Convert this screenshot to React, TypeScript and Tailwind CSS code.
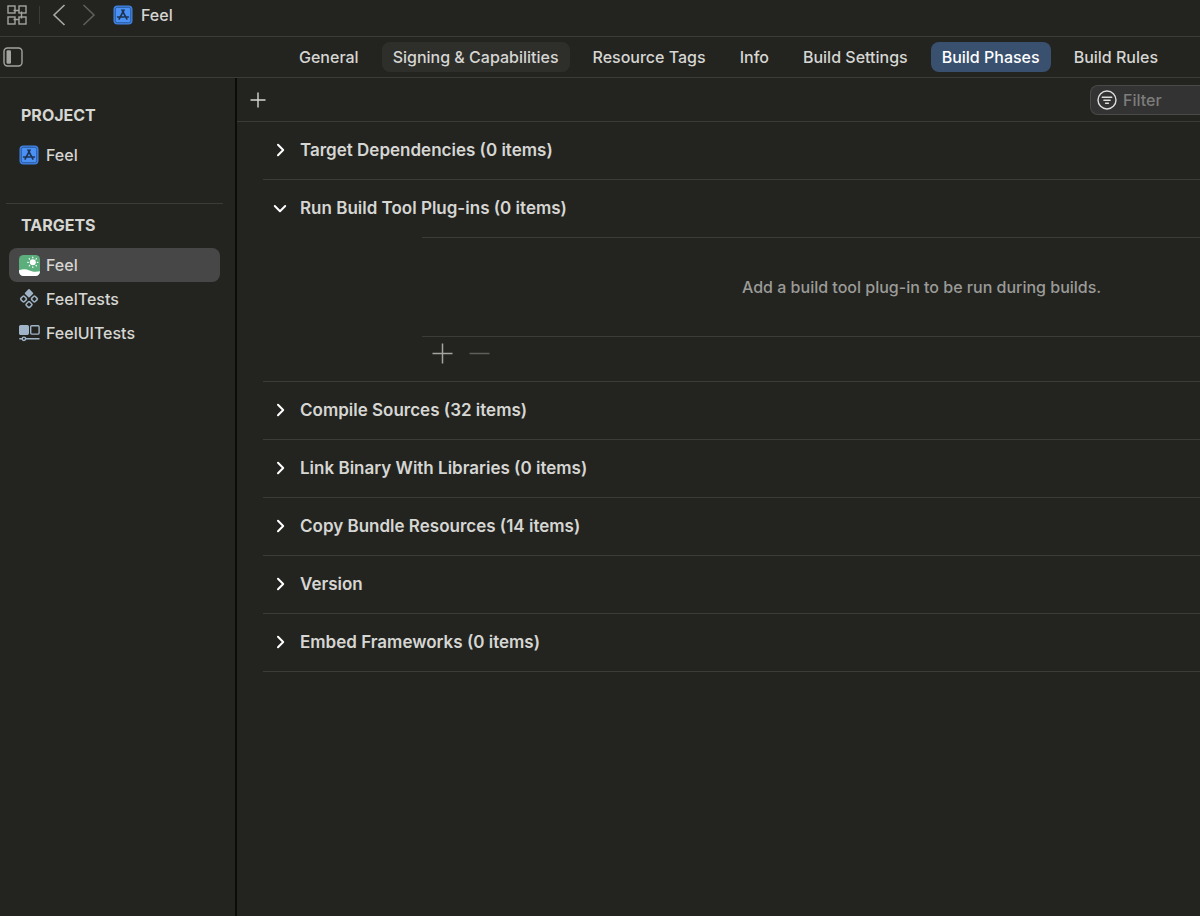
import { ReactNode, useState } from "react";
import clsx from "clsx";

const TABS = [
  "General",
  "Signing & Capabilities",
  "Resource Tags",
  "Info",
  "Build Settings",
  "Build Phases",
  "Build Rules",
];

const PHASES = [
  { id: "dependencies", title: "Target Dependencies (0 items)" },
  { id: "plugins", title: "Run Build Tool Plug-ins (0 items)" },
  { id: "sources", title: "Compile Sources (32 items)" },
  { id: "link", title: "Link Binary With Libraries (0 items)" },
  { id: "resources", title: "Copy Bundle Resources (14 items)" },
  { id: "version", title: "Version" },
  { id: "embed", title: "Embed Frameworks (0 items)" },
];

function GridIcon() {
  return (
    <svg width="20" height="20" viewBox="0 0 20 20" fill="none" stroke="#a3a39f" strokeWidth="1.4">
      <rect x="1" y="1" width="7" height="7" />
      <rect x="12" y="1" width="7" height="7" />
      <rect x="1" y="12" width="7" height="7" />
      <rect x="12" y="12" width="7" height="7" />
      <path d="M6.5 5.5H12M14.5 6.5V13.5M6.5 14.5H12" />
    </svg>
  );
}

function SidebarIcon() {
  return (
    <svg width="20" height="20" viewBox="0 0 20 20" fill="none">
      <rect x="1" y="1" width="18" height="18" rx="3.5" stroke="#a3a39f" strokeWidth="1.4" />
      <rect x="3.5" y="3.2" width="4.5" height="13.6" rx="1.2" fill="#a3a39f" />
    </svg>
  );
}

function ProjectIcon() {
  return (
    <svg className="shrink-0" width="20" height="20" viewBox="0 0 20 20" fill="none">
      <rect x="0.5" y="0.5" width="19" height="19" rx="4" fill="#3f83e6" />
      <rect x="2.3" y="2.3" width="15.4" height="15.4" rx="2" fill="#4a90f5" stroke="#2b568f" strokeWidth="0.9" />
      <path
        d="M9 5L13.9 14.1M11 5L6.1 14.1M4.6 12H11.2M13.2 12H15.4"
        stroke="#1d3350"
        strokeWidth="1.6"
        strokeLinecap="round"
      />
    </svg>
  );
}

function AppIcon() {
  return (
    <svg className="shrink-0" width="21" height="21" viewBox="0 0 21 21" fill="none">
      <rect width="21" height="21" rx="4.5" fill="#5cae7c" />
      <path d="M0 15.2C4 13.8 7 13.8 10.5 15.4C14 16.9 17 17 21 16.2V16.5A4.5 4.5 0 0 1 16.5 21H4.5A4.5 4.5 0 0 1 0 16.5Z" fill="#fff" />
      <circle cx="13.8" cy="7.3" r="3" fill="#fff" />
      <g stroke="#fff" strokeWidth="1.2" strokeLinecap="round">
        <path d="M13.8 2.2V2.8M13.8 11.8V12.4M8.7 7.3H9.3M18.3 7.3H18.9M10.2 3.7L10.6 4.1M17 10.5L17.4 10.9M10.2 10.9L10.6 10.5M17 4.1L17.4 3.7" />
      </g>
    </svg>
  );
}

function UnitTestIcon() {
  return (
    <svg className="shrink-0" width="20" height="20" viewBox="0 0 20 20" fill="none" stroke="#9fb4c6" strokeWidth="1.5" strokeLinejoin="round">
      <path d="M10 1L13.3 4.3L10 7.6L6.7 4.3Z" fill="#9fb4c6" strokeWidth="1.8" />
      <rect x="2.2" y="7.6" width="4.8" height="4.8" rx="1.2" transform="rotate(45 4.6 10)" />
      <rect x="13" y="7.6" width="4.8" height="4.8" rx="1.2" transform="rotate(45 15.4 10)" />
      <rect x="7.6" y="13.2" width="4.8" height="4.8" rx="1.2" transform="rotate(45 10 15.6)" />
    </svg>
  );
}

function UITestIcon() {
  return (
    <svg className="shrink-0" width="21" height="18" viewBox="0 0 21 18" fill="none" stroke="#9fb4c6" strokeWidth="1.4">
      <rect x="0.7" y="1.7" width="8.6" height="8.6" rx="1" fill="#9fb4c6" />
      <rect x="11.7" y="1.7" width="8.4" height="8.4" rx="1" />
      <path d="M0.3 14.8H3.2M6.6 14.8H20.5" />
      <circle cx="4.9" cy="14.8" r="1.7" />
    </svg>
  );
}

function FilterIcon() {
  return (
    <svg className="shrink-0" width="20" height="20" viewBox="0 0 20 20" fill="none" stroke="#dededc" strokeLinecap="round">
      <circle cx="10" cy="10" r="9" strokeWidth="1.4" />
      <path d="M5.3 7.2H14.7M6.9 10.2H13.1M8.6 13.2H11.4" strokeWidth="1.5" />
    </svg>
  );
}

function NavItem({ icon, label, selected }: { icon: ReactNode; label: string; selected?: boolean }) {
  return (
    <button
      className={clsx(
        "flex h-[34px] w-full items-center gap-1.5 rounded-lg px-[9px] text-left",
        selected && "bg-[#474747]"
      )}
    >
      <span className="flex w-[22px] justify-center">{icon}</span>
      {label}
    </button>
  );
}

function PluginsBody() {
  return (
    <div className="pl-[159px]">
      <div className="flex h-[100px] items-center border-y border-[#3b3b39] pl-80 text-[#9b9b98]">
        <p className="whitespace-nowrap">Add a build tool plug-in to be run during builds.</p>
      </div>
      <div className="flex h-11 items-start gap-4 px-2.5 pt-1.5">
        <button aria-label="Add plug-in">
          <svg width="21" height="21" viewBox="0 0 21 21" stroke="#a3a39f" strokeWidth="1.5">
            <path d="M0.5 10.5H20.5M10.5 0.5V20.5" />
          </svg>
        </button>
        <button aria-label="Remove plug-in" disabled>
          <svg width="21" height="21" viewBox="0 0 21 21" stroke="#5e5e5b" strokeWidth="1.5">
            <path d="M0.5 10.5H20.5" />
          </svg>
        </button>
      </div>
    </div>
  );
}

export default function App() {
  const [tab, setTab] = useState("Build Phases");
  const [open, setOpen] = useState<string[]>(["plugins"]);

  const toggle = (id: string) => {
    setOpen((prev) => (prev.includes(id) ? prev.filter((p) => p !== id) : [...prev, id]));
  };

  return (
    <div className="flex min-h-screen flex-col overflow-hidden bg-[#232420] font-[Inter,sans-serif] text-base leading-5 font-medium text-[#d6d6d3]">
      {/* Path bar */}
      <header className="flex h-[37px] items-center border-b border-[#3b3b39] px-[7px] pb-1.5">
        <button aria-label="Related items">
          <GridIcon />
        </button>
        <div className="mx-3 h-[18px] w-px bg-[#3b3b39]" />
        <button aria-label="Back">
          <svg width="14" height="22" viewBox="0 0 14 22" fill="none" stroke="#a9a9a6" strokeWidth="1.6">
            <path d="M12.5 1L2 11L12.5 21" />
          </svg>
        </button>
        <button className="ml-4" aria-label="Forward">
          <svg width="14" height="22" viewBox="0 0 14 22" fill="none" stroke="#5e5e5b" strokeWidth="1.6">
            <path d="M1.5 1L12 11L1.5 21" />
          </svg>
        </button>
        <a href="#project" className="ml-[17px] flex items-center gap-2">
          <ProjectIcon />
          Feel
        </a>
      </header>

      {/* Editor tabs */}
      <div className="flex h-[41px] items-center border-b border-[#3b3b39] pl-[3px]">
        <button aria-label="Toggle sidebar">
          <SidebarIcon />
        </button>
        <nav className="ml-[265px] flex gap-3 whitespace-nowrap">
          {TABS.map((name) => (
            <button
              key={name}
              onClick={() => setTab(name)}
              className={clsx(
                "h-[30px] rounded-lg px-[11px]",
                name === tab && "bg-[#39506f] text-white",
                name === "Signing & Capabilities" && name !== tab && "bg-[#2e2f2b]"
              )}
            >
              {name}
            </button>
          ))}
        </nav>
      </div>

      <div className="flex flex-1">
        {/* Targets */}
        <aside className="w-[237px] shrink-0 border-r-2 border-[#0b0b0a] pt-[27px]">
          <h2 className="px-[21px] font-bold">PROJECT</h2>
          <div className="mt-[13px] pr-[15px] pl-[9px]">
            <NavItem icon={<ProjectIcon />} label="Feel" />
          </div>
          <hr className="mt-[31px] mr-3 ml-1.5 border-[#3b3b39]" />
          <h2 className="mt-[11px] px-[21px] font-bold">TARGETS</h2>
          <div className="mt-[13px] pr-[15px] pl-[9px]">
            <NavItem icon={<AppIcon />} label="Feel" selected />
            <NavItem icon={<UnitTestIcon />} label="FeelTests" />
            <NavItem icon={<UITestIcon />} label="FeelUITests" />
          </div>
        </aside>

        {/* Build phases */}
        <main className="min-w-0 flex-1">
          <div className="flex h-11 items-center justify-between border-b border-[#3b3b39] pl-[13px]">
            <button aria-label="Add build phase">
              <svg width="16" height="16" viewBox="0 0 16 16" stroke="#d6d6d3" strokeWidth="1.4">
                <path d="M0.5 8H15.5M8 0.5V15.5" />
              </svg>
            </button>
            <label className="flex h-[30px] w-[110px] items-center gap-1.5 rounded-l-lg border border-r-0 border-[#4a4a48] bg-[#333333] pl-1.5">
              <FilterIcon />
              <input
                className="w-full min-w-0 bg-transparent outline-none placeholder:text-[#7d7d7b]"
                placeholder="Filter"
                aria-label="Filter"
              />
            </label>
          </div>

          <div className="pl-[26px]">
            {PHASES.map(({ id, title }) => (
              <section key={id} className="border-b border-[#3b3b39]">
                <button
                  onClick={() => toggle(id)}
                  aria-expanded={open.includes(id)}
                  className="flex h-[57px] w-full items-center gap-[13px] pb-0.5 pl-2.5 text-left text-[17px] font-semibold"
                >
                  <svg
                    className={clsx(open.includes(id) && "rotate-90")}
                    width="14"
                    height="14"
                    viewBox="0 0 14 14"
                    fill="none"
                    stroke="#ffffff"
                    strokeWidth="2"
                    strokeLinecap="round"
                    strokeLinejoin="round"
                  >
                    <path d="M5 1.8L10.2 7L5 12.2" />
                  </svg>
                  {title}
                </button>
                {id === "plugins" && open.includes(id) && <PluginsBody />}
              </section>
            ))}
          </div>
        </main>
      </div>
    </div>
  );
}
